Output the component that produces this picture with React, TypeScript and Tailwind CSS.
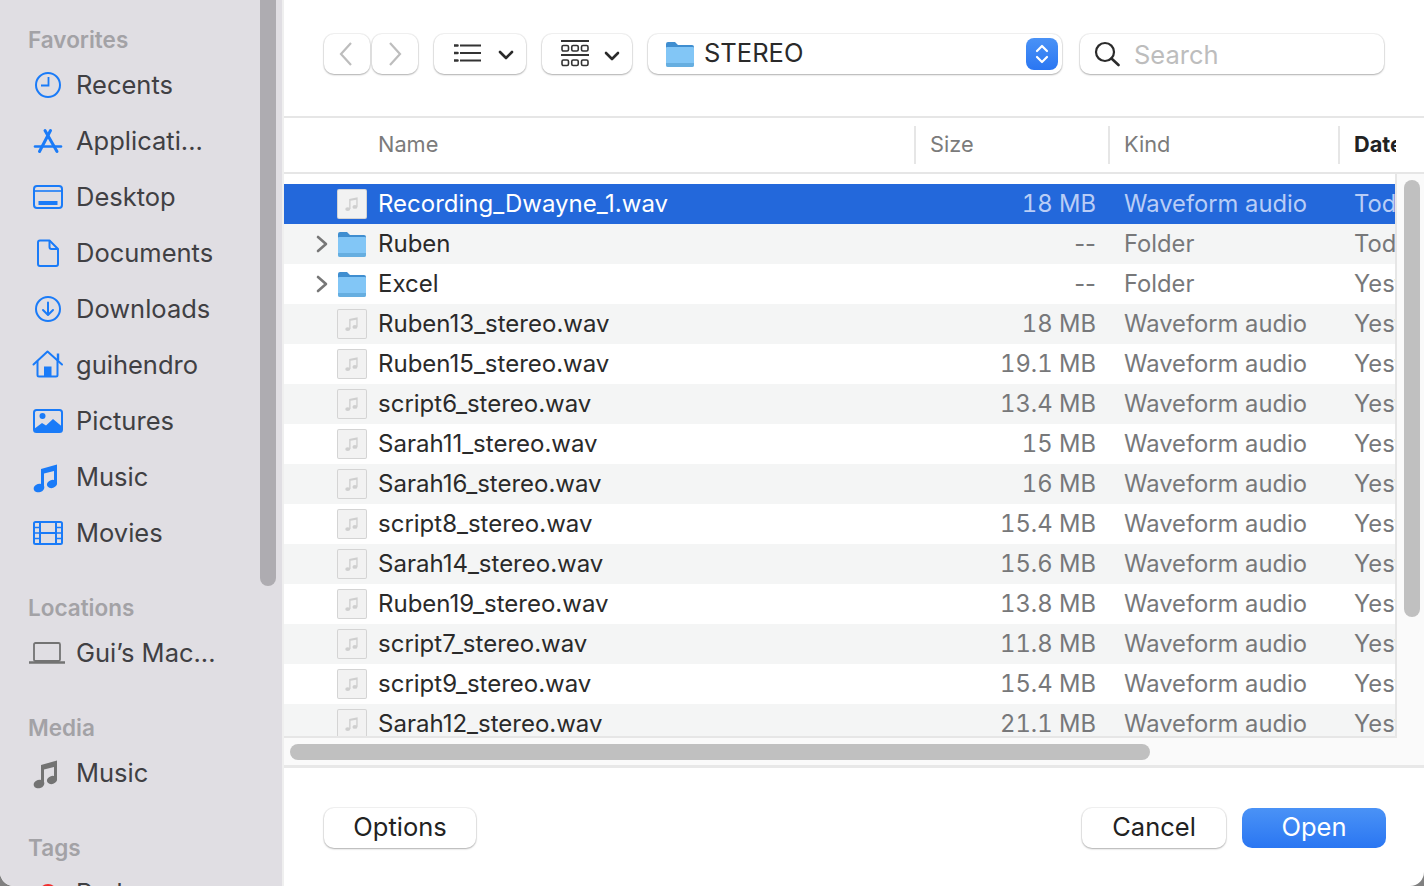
import React from 'react';

const FONT = "font-['Inter','Noto_Sans',sans-serif]";

const Clock = () => (
  <svg viewBox="0 0 32 32" className="h-8 w-8" fill="none" stroke="#1a7bf8" strokeWidth="2">
    <circle cx="16" cy="16" r="12" />
    <path d="M16.5 8v8.5H9" strokeWidth="1.8" />
  </svg>
);
const AppStore = () => (
  <svg viewBox="0 0 32 32" className="h-8 w-8" fill="none" stroke="#1a7bf8" strokeWidth="3" strokeLinecap="round">
    <path d="M18.5 5.5 7.5 26.5" />
    <path d="M13 5.5l12 21" />
    <path d="M3 21.5h26" strokeWidth="2.6" />
  </svg>
);
const DesktopIcon = () => (
  <svg viewBox="0 0 32 32" className="h-8 w-8" fill="none" stroke="#1a7bf8" strokeWidth="2">
    <rect x="2" y="5" width="28" height="22" rx="3" />
    <path d="M2 10h28" strokeWidth="1.6" />
    <rect x="6.5" y="20" width="19" height="4" fill="#1a7bf8" stroke="none" />
  </svg>
);
const DocIcon = () => (
  <svg viewBox="0 0 32 32" className="h-8 w-8" fill="none" stroke="#1a7bf8" strokeWidth="2" strokeLinejoin="round">
    <path d="M8 3.5h9.5L26 12v15a2 2 0 0 1-2 2H8a2 2 0 0 1-2-2V5.5a2 2 0 0 1 2-2z" />
    <path d="M17.5 3.5V10a2 2 0 0 0 2 2H26" />
  </svg>
);
const DownloadIcon = () => (
  <svg viewBox="0 0 32 32" className="h-8 w-8" fill="none" stroke="#1a7bf8" strokeWidth="2" strokeLinecap="round" strokeLinejoin="round">
    <circle cx="16" cy="16" r="12" />
    <path d="M16 9.5v12M11 17l5 5 5-5" />
  </svg>
);
const HomeIcon = () => (
  <svg viewBox="0 0 32 32" className="h-8 w-8" fill="none" stroke="#1a7bf8" strokeWidth="2" strokeLinecap="round" strokeLinejoin="round">
    <path d="M1.5 15.5 15.5 2.5l14.5 13" />
    <path d="M26 11.5V4.5" strokeWidth="2.4" strokeLinecap="butt" />
    <path d="M5.5 12.5V26a1.5 1.5 0 0 0 1.5 1.5h17a1.5 1.5 0 0 0 1.5-1.5V12.5" />
    <rect x="12" y="17.5" width="7.5" height="10" fill="#1a7bf8" stroke="none" />
  </svg>
);
const PicturesIcon = () => (
  <svg viewBox="0 0 32 32" className="h-8 w-8" fill="none">
    <rect x="2" y="5" width="28" height="22" rx="2.5" stroke="#1a7bf8" strokeWidth="2" />
    <circle cx="10.5" cy="11" r="3" fill="#1a7bf8" />
    <path d="M2 24l8-6 4 2.5 7-6.5 9 7.5V27H2z" fill="#1a7bf8" />
  </svg>
);
const NoteIcon = ({ color }: { color: string }) => (
  <svg viewBox="0 0 32 32" className="h-8 w-8" fill={color}>
    <path d="M9 8 25 3.5V23h-3V10L12 12.6V27H9z" />
    <ellipse cx="7" cy="27" rx="5.4" ry="4.2" transform="rotate(-18 7 27)" />
    <ellipse cx="20" cy="23" rx="5.2" ry="4" transform="rotate(-18 20 23)" />
  </svg>
);
const FilmIcon = () => (
  <svg viewBox="0 0 32 32" className="h-8 w-8" fill="none" stroke="#1a7bf8" strokeWidth="2">
    <rect x="2" y="5" width="28" height="22" rx="1.5" />
    <path d="M8 5v22M24 5v22M8 16h16" />
    <path d="M2 10.5h6M2 16h6M2 21.5h6M24 10.5h6M24 16h6M24 21.5h6" strokeWidth="1.6" />
  </svg>
);
const LaptopIcon = () => (
  <svg viewBox="0 0 36 32" className="h-8 w-9" fill="none" stroke="#737373" strokeWidth="1.8">
    <rect x="5" y="6" width="26" height="18" rx="1.5" />
    <path d="M0 25.5h36" strokeWidth="2.6" />
  </svg>
);

const Folder = () => (
  <svg viewBox="0 0 28 28" className="h-7 w-7">
    <path d="M0 4a2 2 0 0 1 2-2h7l3 3h14a2 2 0 0 1 2 2v5H0z" fill="#3f8ed0" />
    <path d="M0 8q0-1 1-1h26q1 0 1 1V25a2 2 0 0 1-2 2H2a2 2 0 0 1-2-2z" fill="#82c6f6" />
    <path d="M0 23h28v2a2 2 0 0 1-2 2H2a2 2 0 0 1-2-2z" fill="#66aee0" />
  </svg>
);

const WavIcon = () => (
  <div className="flex h-7 w-7 items-center justify-center rounded-[1px] bg-[#f2f2f2] shadow-[0_0_0_1px_#d4d4d4]">
    <svg viewBox="0 0 16 16" className="h-[18px] w-[18px]" fill="#cfcfcf">
      <path d="M5.5 3.5 13 2v8.5h-1.2V4.2L6.7 5.2V12.5H5.5z" />
      <ellipse cx="4.2" cy="12.5" rx="2.2" ry="1.7" />
      <ellipse cx="10.6" cy="10.6" rx="2.2" ry="1.7" />
    </svg>
  </div>
);

const favorites: [string, React.ReactNode][] = [
  ['Recents', <Clock />],
  ['Applicati...', <AppStore />],
  ['Desktop', <DesktopIcon />],
  ['Documents', <DocIcon />],
  ['Downloads', <DownloadIcon />],
  ['guihendro', <HomeIcon />],
  ['Pictures', <PicturesIcon />],
  ['Music', <NoteIcon color="#1a7bf8" />],
  ['Movies', <FilmIcon />],
];

const files: { name: string; size: string; kind: string; date: string; folder?: boolean }[] = [
  { name: 'Recording_Dwayne_1.wav', size: '18 MB', kind: 'Waveform audio', date: 'Today' },
  { name: 'Ruben', size: '--', kind: 'Folder', date: 'Today', folder: true },
  { name: 'Excel', size: '--', kind: 'Folder', date: 'Yesterday', folder: true },
  { name: 'Ruben13_stereo.wav', size: '18 MB', kind: 'Waveform audio', date: 'Yesterday' },
  { name: 'Ruben15_stereo.wav', size: '19.1 MB', kind: 'Waveform audio', date: 'Yesterday' },
  { name: 'script6_stereo.wav', size: '13.4 MB', kind: 'Waveform audio', date: 'Yesterday' },
  { name: 'Sarah11_stereo.wav', size: '15 MB', kind: 'Waveform audio', date: 'Yesterday' },
  { name: 'Sarah16_stereo.wav', size: '16 MB', kind: 'Waveform audio', date: 'Yesterday' },
  { name: 'script8_stereo.wav', size: '15.4 MB', kind: 'Waveform audio', date: 'Yesterday' },
  { name: 'Sarah14_stereo.wav', size: '15.6 MB', kind: 'Waveform audio', date: 'Yesterday' },
  { name: 'Ruben19_stereo.wav', size: '13.8 MB', kind: 'Waveform audio', date: 'Yesterday' },
  { name: 'script7_stereo.wav', size: '11.8 MB', kind: 'Waveform audio', date: 'Yesterday' },
  { name: 'script9_stereo.wav', size: '15.4 MB', kind: 'Waveform audio', date: 'Yesterday' },
  { name: 'Sarah12_stereo.wav', size: '21.1 MB', kind: 'Waveform audio', date: 'Yesterday' },
];

const SideLabel = ({ children, className }: { children: string; className: string }) => (
  <div className={`flex h-7 items-center pl-[28px] text-[22.5px] font-semibold text-[#a3a2a6] ${className}`}>{children}</div>
);

const SideRow = ({ label, icon }: { label: string; icon: React.ReactNode }) => (
  <div className="flex h-14 shrink-0 items-center pl-[32px]">
    <div className="flex w-8 shrink-0 justify-center">{icon}</div>
    <span className="ml-3 whitespace-nowrap text-[25.5px] text-[#404043]">{label}</span>
  </div>
);

const btn = 'bg-white shadow-[0_0_0_1px_rgba(0,0,0,0.05),0_1px_2px_rgba(0,0,0,0.28)]';

const Sidebar = () => (
  <aside className="relative h-full w-[284px] shrink-0 overflow-hidden border-r-2 border-[#efefef] bg-[#e0dee3]">
    <div className="absolute right-[6px] top-[-10px] h-[596px] w-4 rounded-full bg-[#aeacb1]" />
    <SideLabel className="mt-[26px]">Favorites</SideLabel>
    <div className="mt-[3px] flex flex-col">
      {favorites.map(([label, icon]) => (
        <SideRow key={label} label={label} icon={icon} />
      ))}
    </div>
    <SideLabel className="mt-[33px]">Locations</SideLabel>
    <div className="mt-[3px]">
      <div className="flex h-14 items-center pl-[29px]">
        <LaptopIcon />
        <span className="ml-[11px] whitespace-nowrap text-[25.5px] text-[#404043]">Gui’s Mac...</span>
      </div>
    </div>
    <SideLabel className="mt-[33px]">Media</SideLabel>
    <div className="mt-[3px]">
      <SideRow label="Music" icon={<NoteIcon color="#737373" />} />
    </div>
    <SideLabel className="mt-[33px]">Tags</SideLabel>
    <div className="mt-[3px] flex h-14 items-center pl-[32px]">
      <div className="flex w-8 justify-center">
        <div className="h-[18px] w-[18px] rounded-full bg-[#f02d2d]" />
      </div>
      <span className="ml-3 text-[25.5px] text-[#404043]">Red</span>
    </div>
  </aside>
);

const Toolbar = () => (
  <div className="flex h-[118px] shrink-0 border-b-2 border-[#e6e6e6] pl-[40px] pt-[34px]">
    <div className={`flex h-10 w-[46px] items-center justify-center rounded-[10px] pr-[2px] ${btn}`}>
      <svg viewBox="0 0 16 26" className="h-[26px] w-4" fill="none" stroke="#bdbdbd" strokeWidth="2.2">
        <path d="M13 2 3 13l10 11" />
      </svg>
    </div>
    <div className={`ml-[2px] flex h-10 w-[46px] items-center justify-center rounded-[10px] ${btn}`}>
      <svg viewBox="0 0 16 26" className="h-[26px] w-4" fill="none" stroke="#bdbdbd" strokeWidth="2.2">
        <path d="m3 2 10 11L3 24" />
      </svg>
    </div>
    <div className={`ml-4 flex h-10 w-[92px] items-center rounded-[10px] pb-[2px] pl-5 ${btn}`}>
      <svg viewBox="0 0 28 20" className="h-5 w-7" fill="none" stroke="#333" strokeWidth="2">
        <path d="M6 2.5h21M6 10h21M6 17.5h21" />
        <path d="M.5 2.5h3M.5 10h3M.5 17.5h3" strokeWidth="2.6" strokeLinecap="round" />
      </svg>
      <svg viewBox="0 0 16 10" className="ml-[16px] mt-1 h-[10px] w-4" fill="none" stroke="#2a2a2a" strokeWidth="2.6" strokeLinecap="round" strokeLinejoin="round">
        <path d="m2 2 6 6 6-6" />
      </svg>
    </div>
    <div className={`ml-4 flex h-10 w-[90px] items-center rounded-[10px] pl-[19px] ${btn}`}>
      <svg viewBox="0 0 28 28" className="h-7 w-7" fill="none" stroke="#333" strokeWidth="1.6">
        <path d="M0 1h28M0 15h28" strokeWidth="1.8" />
        <rect x="1" y="5.5" width="6.5" height="5.5" rx="1.4" />
        <rect x="10.75" y="5.5" width="6.5" height="5.5" rx="1.4" />
        <rect x="20.5" y="5.5" width="6.5" height="5.5" rx="1.4" />
        <rect x="1" y="20" width="6.5" height="5.5" rx="1.4" />
        <rect x="10.75" y="20" width="6.5" height="5.5" rx="1.4" />
        <rect x="20.5" y="20" width="6.5" height="5.5" rx="1.4" />
      </svg>
      <svg viewBox="0 0 16 10" className="ml-[15px] mt-1 h-[10px] w-4" fill="none" stroke="#2a2a2a" strokeWidth="2.6" strokeLinecap="round" strokeLinejoin="round">
        <path d="m2 2 6 6 6-6" />
      </svg>
    </div>
    <div className={`ml-4 flex h-10 w-[414px] items-center rounded-[10px] pl-[18px] pr-[4px] ${btn}`}>
      <Folder />
      <span className="mb-[2px] ml-[10px] flex-1 text-[25.5px] leading-none text-[#2a2a2a]">STEREO</span>
      <div className="flex h-8 w-8 items-center justify-center rounded-[8px] bg-gradient-to-b from-[#4a92f6] to-[#2a76f2]">
        <svg viewBox="0 0 16 24" className="h-6 w-4" fill="none" stroke="#fff" strokeWidth="2.2" strokeLinecap="round" strokeLinejoin="round">
          <path d="m3 9 5-5 5 5M3 15l5 5 5-5" />
        </svg>
      </div>
    </div>
    <div className={`ml-[18px] flex h-10 w-[304px] items-center rounded-[10px] pl-[14px] ${btn}`}>
      <svg viewBox="0 0 26 26" className="h-[26px] w-[26px]" fill="none" stroke="#2a2a2a" strokeWidth="2.2" strokeLinecap="round">
        <circle cx="11" cy="11" r="9" />
        <path d="m17.5 17.5 7 6.5" strokeWidth="2.6" />
      </svg>
      <span className="ml-[14px] mt-[2px] text-[25.5px] leading-none text-[#bdbdbd]">Search</span>
    </div>
  </div>
);

const HeaderCell = ({ children, className }: { children: string; className: string }) => (
  <div className={`flex h-[38px] items-center overflow-hidden whitespace-nowrap text-[21.75px] ${className}`}>{children}</div>
);

const ColumnHeader = () => (
  <div className="flex h-[56px] shrink-0 items-center border-b-2 border-[#e6e6e6]">
    <HeaderCell className="w-[630px] pb-[2px] pl-[94px] text-[#7b7b7b]">Name</HeaderCell>
    <HeaderCell className="w-[194px] border-l-2 border-[#e6e6e6] pb-[2px] pl-[14px] text-[#7b7b7b]">Size</HeaderCell>
    <HeaderCell className="w-[230px] border-l-2 border-[#e6e6e6] pb-[2px] pl-[14px] text-[#7b7b7b]">Kind</HeaderCell>
    <HeaderCell className="w-[58px] border-l-2 border-[#e6e6e6] pb-[2px] pl-[14px] font-bold text-[#222]">Date Modified</HeaderCell>
  </div>
);

const FileRow = ({ file, index }: { file: (typeof files)[number]; index: number }) => {
  const selected = index === 0;
  const rowBg = selected ? 'bg-[#2368db]' : index % 2 === 1 ? 'bg-[#f4f5f5]' : 'bg-white';
  const dim = selected ? 'text-[#b9cdf6]' : 'text-[#77787a]';
  return (
    <div className={`flex h-10 shrink-0 items-center whitespace-nowrap text-[24px] ${rowBg}`}>
      <div className="flex w-[54px] shrink-0 justify-end pr-[10px]">
        {file.folder && (
          <svg viewBox="0 0 12 18" className="h-[18px] w-3" fill="none" stroke="#777" strokeWidth="2.6" strokeLinecap="round" strokeLinejoin="round">
            <path d="m2 2 8 7-8 7" />
          </svg>
        )}
      </div>
      <div className="w-[40px] shrink-0">{file.folder ? <Folder /> : <WavIcon />}</div>
      <div className={`w-[536px] shrink-0 ${selected ? 'text-white' : 'text-[#2a2a2a]'}`}>{file.name}</div>
      <div className={`w-[182px] shrink-0 text-right text-[23.75px] ${file.folder ? '' : 'tabular-nums'} ${dim}`}>{file.size}</div>
      <div className={`ml-[28px] w-[230px] shrink-0 text-[23.75px] ${dim}`}>{file.kind}</div>
      <div className={`min-w-0 flex-1 overflow-hidden text-[23.75px] ${dim}`}>{file.date}</div>
    </div>
  );
};

const FileList = () => (
  <div className="flex h-[564px] shrink-0">
    <div className="flex w-[1113px] shrink-0 flex-col overflow-hidden border-b-2 border-r-2 border-[#e6e6e6] pt-[10px]">
      {files.map((f, i) => (
        <FileRow key={f.name} file={f} index={i} />
      ))}
    </div>
    <div className="min-w-0 flex-1 bg-[#fafafa] pl-[7px] pt-[6px]">
      <div className="h-[437px] w-4 rounded-full bg-[#c0c0c0]" />
    </div>
  </div>
);

const Footer = () => (
  <div className="flex flex-1 items-start pl-[40px] pr-[38px] pt-[40px]">
    <div className={`flex h-10 w-[152px] items-center justify-center rounded-[10px] pb-[2px] text-[25.5px] text-[#222] ${btn}`}>Options</div>
    <div className={`ml-auto flex h-10 w-[144px] items-center justify-center rounded-[10px] pb-[2px] text-[25.5px] text-[#222] ${btn}`}>Cancel</div>
    <div className="ml-4 flex h-10 w-[144px] items-center justify-center rounded-[10px] bg-gradient-to-b from-[#4a92f6] to-[#2a76f2] pb-[2px] text-[25.5px] text-white">Open</div>
  </div>
);

export default function App() {
  return (
    <div className={`h-[886px] w-[1424px] overflow-hidden bg-[#808080] ${FONT}`}>
      <div className="flex h-full overflow-hidden rounded-b-[14px] bg-white">
        <Sidebar />
        <main className="flex h-full min-w-0 flex-1 flex-col">
          <Toolbar />
          <ColumnHeader />
          <FileList />
          <div className="h-[30px] shrink-0 border-b-[3px] border-[#e8e8e8] bg-[#fafafa] pl-[6px] pt-[6px]">
            <div className="h-4 w-[860px] rounded-full bg-[#c0c0c0]" />
          </div>
          <Footer />
        </main>
      </div>
    </div>
  );
}
